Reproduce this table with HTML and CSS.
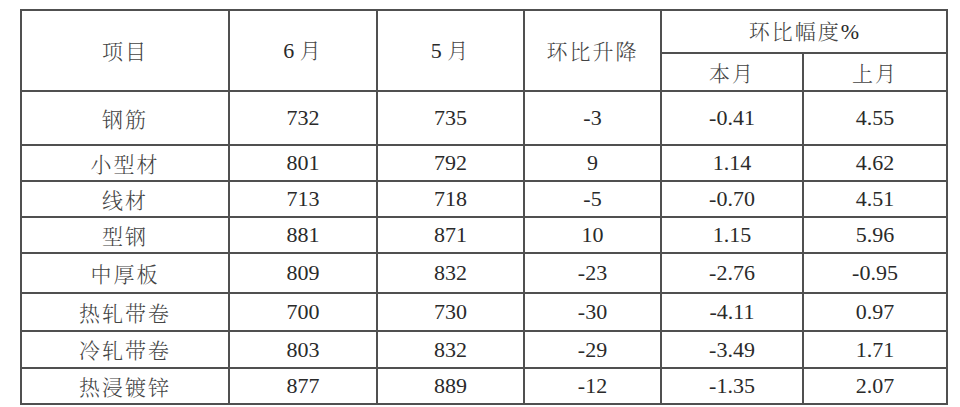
FILE: index.html
```html
<!DOCTYPE html>
<html lang="zh-CN">
<head>
<meta charset="utf-8">
<title>钢材价格环比</title>
<link rel="stylesheet" href="styles.css">
</head>
<body>
<table class="price-table">
  <colgroup>
    <col class="c1"><col class="c2"><col class="c3"><col class="c4"><col class="c5"><col class="c6">
  </colgroup>
  <thead>
    <tr class="h1">
      <th rowspan="2" class="cjk">项目</th>
      <th rowspan="2">6 <span class="cjk">月</span></th>
      <th rowspan="2">5 <span class="cjk">月</span></th>
      <th rowspan="2" class="cjk">环比升降</th>
      <th colspan="2"><span class="cjk">环比幅度</span>%</th>
    </tr>
    <tr class="h2">
      <th class="cjk">本月</th>
      <th class="cjk">上月</th>
    </tr>
  </thead>
  <tbody>
    <tr class="r54"><td class="cjk">钢筋</td><td>732</td><td>735</td><td>-3</td><td>-0.41</td><td>4.55</td></tr>
    <tr class="r36"><td class="cjk">小型材</td><td>801</td><td>792</td><td>9</td><td>1.14</td><td>4.62</td></tr>
    <tr class="r36"><td class="cjk">线材</td><td>713</td><td>718</td><td>-5</td><td>-0.70</td><td>4.51</td></tr>
    <tr class="r36"><td class="cjk">型钢</td><td>881</td><td>871</td><td>10</td><td>1.15</td><td>5.96</td></tr>
    <tr class="r40"><td class="cjk">中厚板</td><td>809</td><td>832</td><td>-23</td><td>-2.76</td><td>-0.95</td></tr>
    <tr class="r38"><td class="cjk">热轧带卷</td><td>700</td><td>730</td><td>-30</td><td>-4.11</td><td>0.97</td></tr>
    <tr class="r37"><td class="cjk">冷轧带卷</td><td>803</td><td>832</td><td>-29</td><td>-3.49</td><td>1.71</td></tr>
    <tr class="r36"><td class="cjk">热浸镀锌</td><td>877</td><td>889</td><td>-12</td><td>-1.35</td><td>2.07</td></tr>
  </tbody>
</table>
</body>
</html>
```

FILE: styles.css
```css
html, body {
  margin: 0;
  padding: 0;
  background: #ffffff;
}
body {
  padding: 9px 0 0 20px;
}
.price-table {
  border-collapse: collapse;
  width: 926px;
  table-layout: fixed;
  font-family: "Liberation Serif", "Noto Serif CJK SC", "Noto Sans CJK SC", serif;
  font-size: 22px;
  color: #2a2a2a;
}
.c1 { width: 208px; }
.c2 { width: 148px; }
.c3 { width: 147px; }
.c4 { width: 137px; }
.c5 { width: 142px; }
.c6 { width: 144px; }
.price-table th,
.price-table td {
  border: 2px solid #505050;
  padding: 0;
  text-align: center;
  vertical-align: middle;
  font-weight: normal;
  line-height: 1;
}
.price-table .cjk {
  font-family: "Noto Serif CJK SC", "Noto Sans CJK SC", serif;
  font-weight: 300;
  letter-spacing: 2px;
  font-size: 21px;
  color: #444444;
}
.h1 th { height: 41px; }
.h2 th { height: 36px; }
.r54 td { height: 52px; }
.r40 td { height: 38px; }
.r38 td { height: 36px; }
.r37 td { height: 35px; }
.r36 td { height: 34px; }
```
